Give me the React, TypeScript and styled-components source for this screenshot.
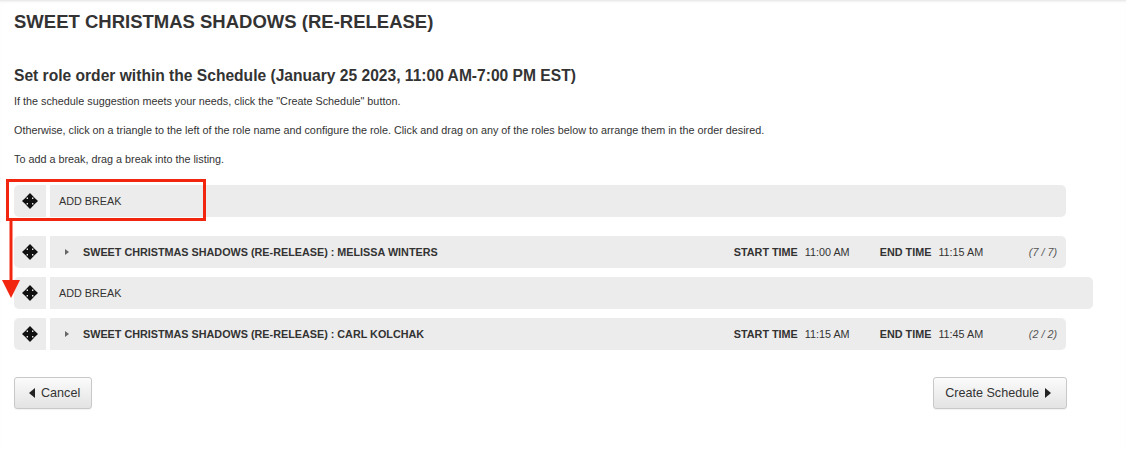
import React from 'react';
import styled, { createGlobalStyle } from 'styled-components';

const GlobalStyle = createGlobalStyle`
  html, body {
    margin: 0;
    padding: 0;
    background: #fff;
    font-family: "Liberation Sans", Arial, Helvetica, sans-serif;
    color: #333;
  }
`;

const Page = styled.div`
  position: relative;
  min-height: 452px;
  box-shadow: inset 0 3px 3px -2px rgba(0, 0, 0, 0.12);
  padding: 10px 0 0 14px;
  box-sizing: border-box;
`;

const Title = styled.h1`
  margin: 0;
  font-size: 18.5px;
  font-weight: bold;
  line-height: 24px;
  color: #333;
`;

const Subtitle = styled.h2`
  margin: 31px 0 0 0;
  font-size: 15.6px;
  font-weight: bold;
  line-height: 22px;
  color: #333;
`;

const Help = styled.p`
  margin: 0;
  font-size: 10.8px;
  line-height: 14px;
  color: #333;
  & + & {
    margin-top: 15px;
  }
  &:first-of-type {
    margin-top: 7px;
  }
`;

const Palette = styled.div`
  margin-top: 19px;
`;

const List = styled.div`
  margin-top: 19px;
  display: flex;
  flex-direction: column;
  gap: 9px;
`;

const Row = styled.div<{ $wide?: boolean }>`
  display: flex;
  gap: 4px;
  height: 32px;
  margin-right: ${(p) => (p.$wide ? '33px' : '60px')};
  font-size: 10.8px;
  color: #333;
  white-space: nowrap;
`;

const Handle = styled.div`
  width: 32px;
  flex: none;
  background: #ececec;
  border-radius: 5px 0 0 5px;
  display: flex;
  align-items: center;
  justify-content: center;
  cursor: move;
`;

const Body = styled.div`
  flex: 1;
  background: #ececec;
  border-radius: 0 5px 5px 0;
  display: flex;
  align-items: center;
  padding: 0 9px 0 9px;
`;

const BreakLabel = styled.span`
  text-transform: uppercase;
`;

const Caret = styled.span`
  width: 0;
  height: 0;
  border-top: 3px solid transparent;
  border-bottom: 3px solid transparent;
  border-left: 4px solid #666;
  margin: 0 14px 0 6px;
`;

const RoleName = styled.span`
  flex: 1;
  font-weight: bold;
  text-transform: uppercase;
`;

const TimeCell = styled.span<{ $w: number }>`
  flex: none;
  width: ${(p) => p.$w}px;
  display: flex;
  gap: 7px;
  align-items: baseline;
`;

const TimeLabel = styled.b`
  font-weight: bold;
`;

const Count = styled.span`
  flex: none;
  font-style: italic;
  color: #555;
`;

const Footer = styled.div`
  margin-top: 27px;
  margin-right: 59px;
  display: flex;
  justify-content: space-between;
`;

const Button = styled.button<{ $arrow: 'left' | 'right' }>`
  height: 32px;
  padding: ${(p) => (p.$arrow === 'left' ? '0 11px 0 14px' : '0 15px 0 11px')};
  border: 1px solid #c8c8c8;
  border-radius: 3px;
  background: linear-gradient(#fbfbfb, #e3e3e3);
  font-family: "Liberation Sans", Arial, sans-serif;
  font-size: 12.6px;
  color: #333;
  display: flex;
  align-items: center;
  gap: 6px;
  box-shadow: 0 1px 1px rgba(0, 0, 0, 0.05);
`;

const Arrow = styled.span<{ $dir: 'left' | 'right' }>`
  width: 0;
  height: 0;
  border-top: 5px solid transparent;
  border-bottom: 5px solid transparent;
  ${(p) =>
    p.$dir === 'left'
      ? 'border-right: 6px solid #222;'
      : 'border-left: 6px solid #222;'}
`;

const Annotation = styled.svg`
  position: absolute;
  left: 0;
  top: 0;
  pointer-events: none;
`;

const MoveIcon = () => (
  <svg width="16" height="16" viewBox="0 0 16 16" fill="#111">
    <rect x="6" y="3" width="4" height="10" />
    <rect x="3" y="6" width="10" height="4" />
    <polygon points="8,0 12.3,4.6 3.7,4.6" />
    <polygon points="8,16 12.3,11.4 3.7,11.4" />
    <polygon points="0,8 4.6,3.7 4.6,12.3" />
    <polygon points="16,8 11.4,3.7 11.4,12.3" />
  </svg>
);

interface Role {
  name: string;
  start: string;
  end: string;
  count: string;
}

const RoleRow: React.FC<{ role: Role }> = ({ role }) => (
  <Row>
    <Handle>
      <MoveIcon />
    </Handle>
    <Body>
      <Caret />
      <RoleName>{role.name}</RoleName>
      <TimeCell $w={146}>
        <TimeLabel>START TIME</TimeLabel>
        {role.start}
      </TimeCell>
      <TimeCell $w={149}>
        <TimeLabel>END TIME</TimeLabel>
        {role.end}
      </TimeCell>
      <Count>{role.count}</Count>
    </Body>
  </Row>
);

const BreakRow: React.FC<{ wide?: boolean }> = ({ wide }) => (
  <Row $wide={wide}>
    <Handle>
      <MoveIcon />
    </Handle>
    <Body>
      <BreakLabel>Add Break</BreakLabel>
    </Body>
  </Row>
);

export default function App() {
  return (
    <Page>
      <GlobalStyle />
      <Title>SWEET CHRISTMAS SHADOWS (RE-RELEASE)</Title>
      <Subtitle>
        Set role order within the Schedule (January 25 2023, 11:00 AM-7:00 PM EST)
      </Subtitle>
      <Help>If the schedule suggestion meets your needs, click the "Create Schedule" button.</Help>
      <Help>
        Otherwise, click on a triangle to the left of the role name and configure the role. Click
        and drag on any of the roles below to arrange them in the order desired.
      </Help>
      <Help>To add a break, drag a break into the listing.</Help>

      <Palette>
        <BreakRow />
      </Palette>

      <List>
        <RoleRow
          role={{
            name: 'Sweet Christmas Shadows (Re-Release) : Melissa Winters',
            start: '11:00 AM',
            end: '11:15 AM',
            count: '(7 / 7)',
          }}
        />
        <BreakRow wide />
        <RoleRow
          role={{
            name: 'Sweet Christmas Shadows (Re-Release) : Carl Kolchak',
            start: '11:15 AM',
            end: '11:45 AM',
            count: '(2 / 2)',
          }}
        />
      </List>

      <Footer>
        <Button $arrow="left">
          <Arrow $dir="left" />
          Cancel
        </Button>
        <Button $arrow="right">
          Create Schedule
          <Arrow $dir="right" />
        </Button>
      </Footer>

      <Annotation width="1126" height="452">
        <rect x="7.5" y="180.5" width="197" height="39" fill="none" stroke="#f2250f" strokeWidth="3" />
        <line x1="11" y1="220" x2="11" y2="282" stroke="#f2250f" strokeWidth="3" />
        <polygon points="2,280 20,280 11,298" fill="#f2250f" />
      </Annotation>
    </Page>
  );
}
